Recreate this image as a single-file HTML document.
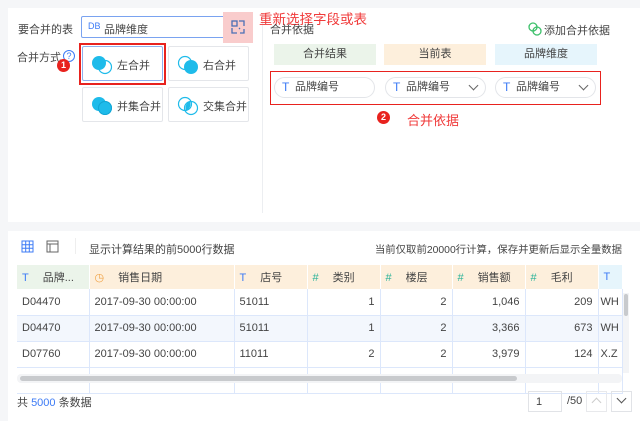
<!DOCTYPE html>
<html><head><meta charset="utf-8"><style>
*{box-sizing:border-box;margin:0;padding:0}
body{width:640px;height:421px;background:#f5f6f8;font-family:"Liberation Sans","Noto Sans CJK SC",sans-serif;font-size:11px;color:#444;position:relative;overflow:hidden}
.a{position:absolute}
.top{left:8px;top:8px;width:632px;height:214px;background:#fff}
.bot{left:8px;top:231px;width:632px;height:190px;background:#fff}
.btn{position:absolute;width:81px;height:35px;border:1px solid #e4e6ea;border-radius:2px;background:#fff}
.btn span{position:absolute;left:34px;top:10px;font-size:11px;color:#444}
.btn svg{position:absolute;left:8px;top:7px}
.hd{position:absolute;height:21px;width:102px;text-align:center;line-height:21px;color:#444}
.pill{position:absolute;top:77px;height:21px;width:101px;border:1px solid #e3e5e9;border-radius:11px;line-height:19px;padding-left:20px;color:#444}
.pill i{position:absolute;left:7px;top:0;font-style:normal;color:#3d7bf5;font-size:12px}
.pill b{position:absolute;right:8px;top:4px;width:7px;height:7px;border-right:1.2px solid #666;border-bottom:1.2px solid #666;transform:rotate(45deg)}
table{border-collapse:collapse;position:absolute;left:17px;top:265px;width:605px;table-layout:fixed}
td,th{height:26px;border-right:1px solid #dce7fb;border-bottom:1px solid #dce7fb;padding:0 5px;font-weight:normal;white-space:nowrap;overflow:hidden;font-size:11px;color:#444}
th{text-align:left;height:24px;border-bottom:none;border-right:1px solid #fff}
td.r{text-align:right}
tr.s td{background:#f3f7fd}
th i{font-style:normal;margin-right:14px;color:#3d7bf5}
th i.g{color:#2bb399}
.badge{position:absolute;width:13px;height:13px;border-radius:50%;background:#e8221e;color:#fff;font-size:9px;font-weight:bold;text-align:center;line-height:13px}
</style></head><body>
<div class="a top"></div>
<div class="a bot"></div>
<div class="a" style="left:262px;top:14px;width:1px;height:199px;background:#eceef1"></div>

<div class="a" style="left:18px;top:21px">要合并的表</div>
<div class="a" style="left:81px;top:16px;width:169px;height:22px;border:1px solid #7aa3f0;border-radius:2px"></div>
<div class="a" style="left:88px;top:21px;color:#3d7bf5;font-size:9px">DB</div>
<div class="a" style="left:104px;top:21px">品牌维度</div>
<div class="a" style="left:223px;top:12px;width:30px;height:31px;background:#f9cccc"></div>
<svg class="a" style="left:230px;top:19px" width="16" height="16" viewBox="0 0 16 16" fill="none" stroke="#4a6fb5" stroke-width="1.3"><rect x="2" y="2" width="5" height="5"/><path d="M9 2h5v5M2 9v5h5M14 10v4h-4M10 9l-1 1"/></svg>
<div class="a" style="left:259px;top:8px;color:#f03a3a;font-size:13.5px">重新选择字段或表</div>

<div class="a" style="left:17px;top:49px">合并方式</div>
<div class="a" style="left:63px;top:50px;width:12px;height:12px;border:1px solid #3d7bf5;border-radius:50%;color:#3d7bf5;font-size:9px;text-align:center;line-height:10px">?</div>
<div class="badge" style="left:57px;top:59px">1</div>

<div class="btn" style="left:82px;top:46px;border-color:#8fb0ee"><svg width="22" height="22"><circle cx="8" cy="9" r="7" fill="#1ebbea"/><circle cx="14" cy="13" r="6.5" fill="none" stroke="#1ebbea" stroke-width="1.2"/></svg><span>左合并</span></div>
<div class="a" style="left:79px;top:43px;width:87px;height:42px;border:2px solid #e8221e"></div>
<div class="btn" style="left:168px;top:46px"><svg width="22" height="22"><circle cx="14" cy="13" r="7" fill="#1ebbea"/><circle cx="8" cy="9" r="6.5" fill="none" stroke="#1ebbea" stroke-width="1.2"/></svg><span>右合并</span></div>
<div class="btn" style="left:82px;top:87px"><svg width="22" height="22"><circle cx="8" cy="9" r="7" fill="#1ebbea"/><circle cx="14" cy="13" r="7" fill="#1ebbea"/><circle cx="14" cy="13" r="6.5" fill="none" stroke="#12a5d4" stroke-width="1"/></svg><span>并集合并</span></div>
<div class="btn" style="left:168px;top:87px"><svg width="22" height="22"><circle cx="8" cy="9" r="6.5" fill="none" stroke="#1ebbea" stroke-width="1.2"/><circle cx="14" cy="13" r="6.5" fill="none" stroke="#1ebbea" stroke-width="1.2"/><path d="M13 6.6A6.5 6.5 0 0 1 9 15.4 6.5 6.5 0 0 1 13 6.6z" fill="#1ebbea"/></svg><span>交集合并</span></div>

<div class="a" style="left:270px;top:21px">合并依据</div>
<svg class="a" style="left:528px;top:22px" width="14" height="14" fill="none" stroke="#3cc06a" stroke-width="1.3"><circle cx="5" cy="5" r="4"/><circle cx="9" cy="9" r="4"/></svg>
<div class="a" style="left:544px;top:22px">添加合并依据</div>
<div class="hd" style="left:274px;top:44px;background:#ebf4ea">合并结果</div>
<div class="hd" style="left:384px;top:44px;background:#fdefdc">当前表</div>
<div class="hd" style="left:495px;top:44px;background:#e6f5fc">品牌维度</div>
<div class="a" style="left:270px;top:71px;width:331px;height:34px;border:1.5px solid #e8221e"></div>
<div class="pill" style="left:274px"><i>T</i>品牌编号</div>
<div class="pill" style="left:385px"><i>T</i>品牌编号<b></b></div>
<div class="pill" style="left:495px"><i>T</i>品牌编号<b></b></div>
<div class="badge" style="left:377px;top:111px">2</div>
<div class="a" style="left:407px;top:110px;color:#f03a3a;font-size:13px">合并依据</div>

<svg class="a" style="left:21px;top:240px" width="13" height="13" fill="none" stroke="#3d7bf5" stroke-width="1"><rect x="1" y="1" width="11" height="11"/><path d="M4.7 1v11M8.3 1v11M1 4.7h11M1 8.3h11"/></svg>
<svg class="a" style="left:46px;top:240px" width="13" height="13" fill="none" stroke="#666" stroke-width="1"><rect x="1" y="1" width="11" height="11"/><path d="M1 4h11M4 4v8"/></svg>
<div class="a" style="left:75px;top:238px;width:1px;height:16px;background:#eee"></div>
<div class="a" style="left:89px;top:241px">显示计算结果的前5000行数据</div>
<div class="a" style="right:18px;top:241px;font-size:10.4px;white-space:nowrap">当前仅取前20000行计算，保存并更新后显示全量数据</div>

<table>
<colgroup><col style="width:72px"><col style="width:145px"><col style="width:73px"><col style="width:73px"><col style="width:72px"><col style="width:73px"><col style="width:73px"><col style="width:24px"></colgroup>
<tr><th style="background:#ebf4ea"><i>T</i>品牌...</th><th style="background:#fdefdc"><i style="color:#f0a040">◷</i>销售日期</th><th style="background:#fdefdc"><i>T</i>店号</th><th style="background:#fdefdc"><i class="g">#</i>类别</th><th style="background:#fdefdc"><i class="g">#</i>楼层</th><th style="background:#fdefdc"><i class="g">#</i>销售额</th><th style="background:#fdefdc"><i class="g">#</i>毛利</th><th style="background:#e6f5fc"><i>T</i></th></tr>
<tr><td>D04470</td><td>2017-09-30 00:00:00</td><td>51011</td><td class="r">1</td><td class="r">2</td><td class="r">1,046</td><td class="r">209</td><td style="padding:0 2px">WH</td></tr>
<tr class="s"><td>D04470</td><td>2017-09-30 00:00:00</td><td>51011</td><td class="r">1</td><td class="r">2</td><td class="r">3,366</td><td class="r">673</td><td style="padding:0 2px">WH</td></tr>
<tr><td>D07760</td><td>2017-09-30 00:00:00</td><td>11011</td><td class="r">2</td><td class="r">2</td><td class="r">3,979</td><td class="r">124</td><td style="padding:0 2px">X.Z</td></tr>
<tr><td style="height:9px"></td><td></td><td></td><td></td><td></td><td></td><td></td><td></td></tr>
</table>
<div class="a" style="left:17px;top:374px;width:605px;height:9px;background:#f3f4f6;border-radius:4px"></div>
<div class="a" style="left:20px;top:376px;width:497px;height:5px;background:#c8cacd;border-radius:3px"></div>
<div class="a" style="left:623px;top:293px;width:6px;height:80px;background:#f3f4f6"></div>
<div class="a" style="left:624px;top:294px;width:4px;height:22px;background:#c8cacd;border-radius:2px"></div>

<div class="a" style="left:17px;top:394px">共 <span style="color:#3d7bf5">5000</span> 条数据</div>
<div class="a" style="left:528px;top:391px;width:34px;height:21px;border:1px solid #e1e3e7;padding:4px 0 0 7px">1</div>
<div class="a" style="left:567px;top:395px">/50</div>
<div class="a" style="left:586px;top:391px;width:21px;height:21px;border:1px solid #e8e9ec"></div>
<div class="a" style="left:593px;top:399px;width:7px;height:7px;border-left:1px solid #ccc;border-top:1px solid #ccc;transform:rotate(45deg)"></div>
<div class="a" style="left:611px;top:391px;width:21px;height:21px;border:1px solid #e1e3e7"></div>
<div class="a" style="left:618px;top:395px;width:7px;height:7px;border-right:1px solid #555;border-bottom:1px solid #555;transform:rotate(45deg)"></div>
</body></html>
